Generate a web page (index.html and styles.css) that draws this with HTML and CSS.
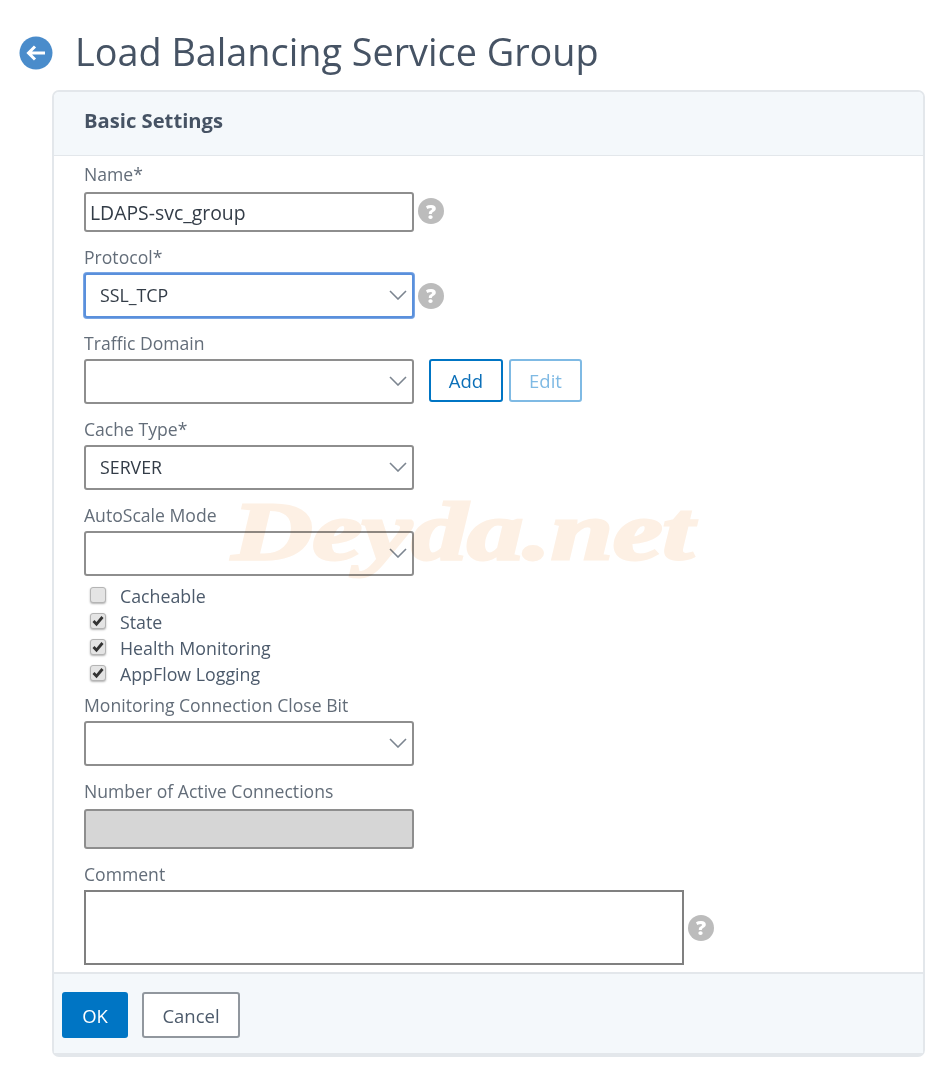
FILE: index.html
```html
<!DOCTYPE html>
<html lang="en">
<head>
    <meta charset="UTF-8">
    <title>Load Balancing Service Group</title>
    <link rel="stylesheet" href="styles.css">
</head>
<body>
    <div class="page-title">
        <a class="back-icon" href="#">
            <svg width="34" height="34" viewBox="0 0 34 34">
                <circle cx="17" cy="17" r="16.5" fill="#4a8ccb"/>
                <path d="M26 17H10M16 10.5L9.500 17l6.500 6.500" fill="none" stroke="#fff" stroke-width="3"/>
            </svg>
        </a>
        <h1>Load Balancing Service Group</h1>
    </div>

    <div class="card">
        <h2 class="card-header">Basic Settings</h2>

        <form class="card-body">
            <div class="field">
                <label class="label label-wide">Name*</label>
                <div class="row">
                    <input class="text-input name-input" type="text" value="LDAPS-svc_group">
                    <span class="help help-up">?</span>
                </div>
            </div>

            <div class="field">
                <label class="label">Protocol*</label>
                <div class="row">
                    <div class="select focused">
                        <span>SSL_TCP</span>
                        <svg class="chevron" width="18" height="10" viewBox="0 0 18 10"><path d="M1 1l8 8 8-8" fill="none" stroke="#7c8590" stroke-width="1.600"/></svg>
                    </div>
                    <span class="help">?</span>
                </div>
            </div>

            <div class="field">
                <label class="label">Traffic Domain</label>
                <div class="row">
                    <div class="select">
                        <span></span>
                        <svg class="chevron" width="18" height="10" viewBox="0 0 18 10"><path d="M1 1l8 8 8-8" fill="none" stroke="#7c8590" stroke-width="1.600"/></svg>
                    </div>
                    <button class="btn btn-outline" type="button">Add</button>
                    <button class="btn btn-outline btn-disabled" type="button">Edit</button>
                </div>
            </div>

            <div class="field">
                <label class="label">Cache Type*</label>
                <div class="select">
                    <span>SERVER</span>
                    <svg class="chevron" width="18" height="10" viewBox="0 0 18 10"><path d="M1 1l8 8 8-8" fill="none" stroke="#7c8590" stroke-width="1.600"/></svg>
                </div>
            </div>

            <div class="field field-tight">
                <label class="label">AutoScale Mode</label>
                <div class="select">
                    <span></span>
                    <svg class="chevron" width="18" height="10" viewBox="0 0 18 10"><path d="M1 1l8 8 8-8" fill="none" stroke="#7c8590" stroke-width="1.600"/></svg>
                </div>
            </div>

            <div class="checks">
                <div class="check"><span class="box"></span>Cacheable</div>
                <div class="check"><span class="box"><svg width="12" height="12" viewBox="0 0 12 12"><path d="M1.500 6l3 3.200L10.500 2" fill="none" stroke="#333" stroke-width="2.800"/></svg></span>State</div>
                <div class="check"><span class="box"><svg width="12" height="12" viewBox="0 0 12 12"><path d="M1.500 6l3 3.200L10.500 2" fill="none" stroke="#333" stroke-width="2.800"/></svg></span>Health Monitoring</div>
                <div class="check"><span class="box"><svg width="12" height="12" viewBox="0 0 12 12"><path d="M1.500 6l3 3.200L10.500 2" fill="none" stroke="#333" stroke-width="2.800"/></svg></span>AppFlow Logging</div>
            </div>

            <div class="field">
                <label class="label">Monitoring Connection Close Bit</label>
                <div class="select">
                    <span></span>
                    <svg class="chevron" width="18" height="10" viewBox="0 0 18 10"><path d="M1 1l8 8 8-8" fill="none" stroke="#7c8590" stroke-width="1.600"/></svg>
                </div>
            </div>

            <div class="field">
                <label class="label label-wide">Number of Active Connections</label>
                <input class="text-input name-input readonly" type="text" disabled>
            </div>

            <div class="field comment-field">
                <label class="label">Comment</label>
                <div class="row">
                    <textarea class="comment"></textarea>
                    <span class="help">?</span>
                </div>
            </div>
        </form>

        <div class="card-footer">
            <button class="btn btn-primary" type="button">OK</button>
            <button class="btn btn-cancel" type="button">Cancel</button>
        </div>

        <div class="watermark">Deyda.net</div>
    </div>
</body>
</html>
```

FILE: styles.css
```css
* {
    box-sizing: border-box;
}

body {
    margin: 0;
    background: #fff;
    font-family: "Open Sans", sans-serif;
    color: #4c5a6b;
}

.page-title {
    display: flex;
    align-items: center;
    height: 90px;
    padding: 14px 0 0 19px;
}

.back-icon {
    display: flex;
    width: 34px;
    height: 34px;
    margin: 2px 22px 0 0;
}

h1 {
    margin: 0;
    font-size: 37.800px;
    font-weight: 400;
    line-height: 50px;
    color: #465364;
}

.card {
    position: relative;
    width: 873px;
    height: 967px;
    margin-left: 52px;
    border: 2px solid #e3e7eb;
    border-width: 2px 2px 4px 2px;
    border-radius: 7px;
    display: flex;
    flex-direction: column;
}

.card-header {
    margin: 0;
    height: 64px;
    padding-left: 30px;
    background: #f4f8fb;
    border-bottom: 1px solid #e3e7eb;
    border-radius: 5px 5px 0 0;
    font-size: 20.200px;
    font-weight: 700;
    line-height: 56px;
    color: #465364;
}

.card-body {
    flex: 1;
    padding: 8px 30px 0;
}

.field {
    margin-bottom: 15px;
}

.field-tight {
    margin-bottom: 7px;
}

.comment-field {
    margin-bottom: 0;
}

.label {
    display: block;
    height: 20px;
    margin-bottom: 6px;
    font-size: 17.600px;
    line-height: 20px;
    color: #636d79;
}

.label-wide {
    margin-bottom: 8px;
}

.row {
    display: flex;
    align-items: center;
}

.text-input {
    display: block;
    height: 40px;
    padding: 0 4px;
    border: 2px solid #8e8e8e;
    border-radius: 3px;
    background: #fff;
    font-family: inherit;
    font-size: 19.400px;
    color: #333c47;
}

.name-input {
    width: 330px;
}

.readonly {
    background: #d6d6d6;
}

.select {
    position: relative;
    display: flex;
    align-items: center;
    width: 330px;
    height: 45px;
    padding: 0 0 2px 14px;
    border: 2px solid #8e8e8e;
    border-radius: 3px;
    background: #fff;
    font-size: 17.800px;
    color: #333c47;
}

.select.focused {
    border-color: #5a90dc;
    box-shadow: 0 0 0 1px #7aa6e4;
}

.chevron {
    position: absolute;
    right: 5px;
    top: 15px;
}

.help {
    display: flex;
    align-items: center;
    justify-content: center;
    width: 26px;
    height: 26px;
    margin-left: 4px;
    border-radius: 50%;
    background: #bcbcbc;
    font-size: 20px;
    font-weight: 800;
    color: #fff;
}

.help-up {
    margin-bottom: 2px;
}

.btn {
    padding: 0;
    font-family: inherit;
    font-size: 18.500px;
    border-radius: 3px;
    cursor: pointer;
}

.btn-outline {
    align-self: flex-start;
    width: 74px;
    height: 43px;
    margin-left: 15px;
    border: 2px solid #0075c4;
    background: #fff;
    color: #0b6fb8;
}

.btn-disabled {
    width: 73px;
    margin-left: 6px;
    border-color: #7fbae4;
    color: #7fbae4;
}

.checks {
    margin-bottom: 8px;
    padding-left: 6px;
}

.check {
    display: flex;
    align-items: center;
    height: 26px;
    font-size: 17.800px;
    color: #4c5a6b;
}

.box {
    display: flex;
    align-items: center;
    justify-content: center;
    width: 16px;
    height: 16px;
    margin: -2px 14px 0 0;
    border: 1px solid #b4b4b4;
    border-radius: 3px;
    background: #e4e4e4;
    box-shadow: 0 1px 2px rgba(0, 0, 0, 0.3);
}

.comment {
    display: block;
    width: 600px;
    height: 75px;
    border: 2px solid #808080;
    resize: none;
    background: #fff;
}

.card-footer {
    display: flex;
    align-items: flex-start;
    height: 81px;
    padding: 18px 0 0 8px;
    background: #f4f8fb;
    border-top: 2px solid #e3e7eb;
}

.btn-primary {
    width: 66px;
    height: 46px;
    border: none;
    background: #0075c4;
    color: #fff;
}

.btn-cancel {
    width: 98px;
    height: 46px;
    margin-left: 14px;
    border: 2px solid #91979e;
    background: #fff;
    color: #4c5a6b;
}

.watermark {
    position: absolute;
    left: 178px;
    top: 390px;
    font-family: "Liberation Serif", serif;
    font-size: 82px;
    font-weight: 700;
    font-style: italic;
    line-height: 100px;
    color: #fdf0e4;
    -webkit-text-stroke: 3px #fdf0e4;
    mix-blend-mode: multiply;
    transform: scaleX(1.36);
    transform-origin: left center;
    pointer-events: none;
}
```
